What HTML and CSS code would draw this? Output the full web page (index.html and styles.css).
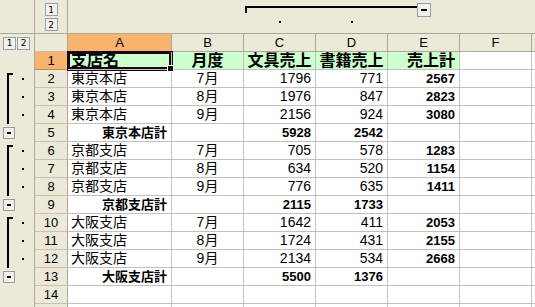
FILE: index.html
```html
<!DOCTYPE html>
<html lang="ja">
<head>
    <meta charset="UTF-8">
    <title>支店別売上 - アウトライン</title>
    <link rel="stylesheet" href="styles.css">
</head>
<body>
<div class="sheet">
    <!-- column outline area -->
    <div class="top corner"></div>
    <div class="top lvl-top">
        <span class="btn">1</span>
        <span class="btn">2</span>
    </div>
    <div class="top"></div>
    <div class="top"></div>
    <div class="top grp-start"><span class="gline first"></span><span class="gdot"></span></div>
    <div class="top grp"><span class="gline"></span><span class="gdot"></span></div>
    <div class="top grp-end"><span class="gline"></span><span class="minus big"></span></div>
    <div class="top"></div>
    <div class="top"></div>

    <!-- column headers -->
    <div class="oc lvl-left"><span class="btn">1</span><span class="btn">2</span></div>
    <div class="rh"></div>
    <div class="ch hl">A</div>
    <div class="ch">B</div>
    <div class="ch">C</div>
    <div class="ch">D</div>
    <div class="ch">E</div>
    <div class="ch">F</div>
    <div class="ch rest"></div>

    <!-- row 1 -->
    <div class="oc"></div>
    <div class="rh hl">1</div>
    <div class="c l g t sel">支店名<span class="handle"></span></div>
    <div class="c m g t">月度</div>
    <div class="c m g t">文具売上</div>
    <div class="c m g t">書籍売上</div>
    <div class="c r g t">売上計</div>
    <div class="c"></div>
    <div class="c rest"></div>

    <!-- 東京本店 -->
    <div class="oc"><span class="bar first"></span><span class="dot"></span></div>
    <div class="rh">2</div>
    <div class="c l">東京本店</div>
    <div class="c m">7月</div>
    <div class="c r">1796</div>
    <div class="c r">771</div>
    <div class="c r b">2567</div>
    <div class="c"></div>
    <div class="c rest"></div>

    <div class="oc"><span class="bar"></span><span class="dot"></span></div>
    <div class="rh">3</div>
    <div class="c l">東京本店</div>
    <div class="c m">8月</div>
    <div class="c r">1976</div>
    <div class="c r">847</div>
    <div class="c r b">2823</div>
    <div class="c"></div>
    <div class="c rest"></div>

    <div class="oc"><span class="bar"></span><span class="dot"></span></div>
    <div class="rh">4</div>
    <div class="c l">東京本店</div>
    <div class="c m">9月</div>
    <div class="c r">2156</div>
    <div class="c r">924</div>
    <div class="c r b">3080</div>
    <div class="c"></div>
    <div class="c rest"></div>

    <div class="oc"><span class="minus"></span></div>
    <div class="rh">5</div>
    <div class="c r b">東京本店計</div>
    <div class="c"></div>
    <div class="c r b">5928</div>
    <div class="c r b">2542</div>
    <div class="c"></div>
    <div class="c"></div>
    <div class="c rest"></div>

    <!-- 京都支店 -->
    <div class="oc"><span class="bar first"></span><span class="dot"></span></div>
    <div class="rh">6</div>
    <div class="c l">京都支店</div>
    <div class="c m">7月</div>
    <div class="c r">705</div>
    <div class="c r">578</div>
    <div class="c r b">1283</div>
    <div class="c"></div>
    <div class="c rest"></div>

    <div class="oc"><span class="bar"></span><span class="dot"></span></div>
    <div class="rh">7</div>
    <div class="c l">京都支店</div>
    <div class="c m">8月</div>
    <div class="c r">634</div>
    <div class="c r">520</div>
    <div class="c r b">1154</div>
    <div class="c"></div>
    <div class="c rest"></div>

    <div class="oc"><span class="bar"></span><span class="dot"></span></div>
    <div class="rh">8</div>
    <div class="c l">京都支店</div>
    <div class="c m">9月</div>
    <div class="c r">776</div>
    <div class="c r">635</div>
    <div class="c r b">1411</div>
    <div class="c"></div>
    <div class="c rest"></div>

    <div class="oc"><span class="minus"></span></div>
    <div class="rh">9</div>
    <div class="c r b">京都支店計</div>
    <div class="c"></div>
    <div class="c r b">2115</div>
    <div class="c r b">1733</div>
    <div class="c"></div>
    <div class="c"></div>
    <div class="c rest"></div>

    <!-- 大阪支店 -->
    <div class="oc"><span class="bar first"></span><span class="dot"></span></div>
    <div class="rh">10</div>
    <div class="c l">大阪支店</div>
    <div class="c m">7月</div>
    <div class="c r">1642</div>
    <div class="c r">411</div>
    <div class="c r b">2053</div>
    <div class="c"></div>
    <div class="c rest"></div>

    <div class="oc"><span class="bar"></span><span class="dot"></span></div>
    <div class="rh">11</div>
    <div class="c l">大阪支店</div>
    <div class="c m">8月</div>
    <div class="c r">1724</div>
    <div class="c r">431</div>
    <div class="c r b">2155</div>
    <div class="c"></div>
    <div class="c rest"></div>

    <div class="oc"><span class="bar"></span><span class="dot"></span></div>
    <div class="rh">12</div>
    <div class="c l">大阪支店</div>
    <div class="c m">9月</div>
    <div class="c r">2134</div>
    <div class="c r">534</div>
    <div class="c r b">2668</div>
    <div class="c"></div>
    <div class="c rest"></div>

    <div class="oc"><span class="minus"></span></div>
    <div class="rh">13</div>
    <div class="c r b">大阪支店計</div>
    <div class="c"></div>
    <div class="c r b">5500</div>
    <div class="c r b">1376</div>
    <div class="c"></div>
    <div class="c"></div>
    <div class="c rest"></div>

    <!-- empty rows -->
    <div class="oc"></div>
    <div class="rh">14</div>
    <div class="c"></div>
    <div class="c"></div>
    <div class="c"></div>
    <div class="c"></div>
    <div class="c"></div>
    <div class="c"></div>
    <div class="c rest"></div>

    <div class="oc"></div>
    <div class="rh"></div>
    <div class="c"></div>
    <div class="c"></div>
    <div class="c"></div>
    <div class="c"></div>
    <div class="c"></div>
    <div class="c"></div>
    <div class="c rest"></div>
</div>
</body>
</html>
```

FILE: styles.css
```css
body {
    margin: 0;
    background: #fff;
}
.sheet {
    display: grid;
    grid-template-columns: 35px 33px 104px 72px 72px 72px 72px 72px 1fr;
    grid-template-rows: 34px repeat(16, 18px);
    width: 535px;
    height: 307px;
    overflow: hidden;
    font-family: "Liberation Sans", "Noto Sans CJK JP", sans-serif;
    color: #000;
}
.sheet > div {
    box-sizing: border-box;
}

/* outline areas */
.top {
    background: #ece9d8;
    border-bottom: 1px solid #aca899;
}
.corner, .lvl-top {
    border-right: 1px solid #aca899;
}
.lvl-top {
    display: flex;
    flex-direction: column;
    align-items: center;
    gap: 2px;
    padding-top: 3px;
}
.grp-start, .grp {
    display: flex;
    flex-direction: column;
}
.gline {
    margin-top: 6px;
    border-top: 2px solid #000;
}
.gline.first {
    height: 5px;
    margin-left: 1px;
    border-left: 2px solid #000;
}
.gdot {
    align-self: center;
    width: 2px;
    height: 2px;
    background: #000;
    margin-top: 13px;
}
.grp-start .gdot {
    margin-top: 8px;
}
.grp-end {
    display: flex;
    align-items: flex-start;
}
.grp-end .gline {
    width: 29px;
}

.btn {
    width: 13px;
    height: 13px;
    box-sizing: border-box;
    border: 1px solid #91a1b6;
    background: #f3f1e8;
    font: 9px "DejaVu Sans", sans-serif;
    display: flex;
    align-items: center;
    justify-content: center;
}
.lvl-left {
    align-items: center;
    padding-left: 3px;
    gap: 1px;
}
.minus {
    width: 12px;
    height: 12px;
    box-sizing: border-box;
    border: 1px solid #8e9eb4;
    background: #f3f1e8;
    margin-left: 3px;
    align-self: center;
    display: flex;
    align-items: center;
    justify-content: center;
}
.minus::before {
    content: "";
    width: 4px;
    height: 2px;
    background: #000;
}
.minus.big {
    width: 14px;
    height: 14px;
    margin-left: 0;
    margin-top: 3px;
    align-self: flex-start;
}
.minus.big::before {
    width: 6px;
}

.oc {
    background: #ece9d8;
    border-right: 1px solid #aca899;
    display: flex;
}
.bar {
    width: 4px;
    margin-left: 7px;
    border-left: 2px solid #000;
}
.bar.first {
    margin-top: 3px;
    border-top: 2px solid #000;
}
.dot {
    width: 2px;
    height: 2px;
    background: #000;
    margin-left: 9px;
    align-self: center;
}

/* headers */
.rh, .ch {
    background: #ece9d8;
    border-right: 1px solid #aca899;
    border-bottom: 1px solid #c7c3b3;
    display: flex;
    align-items: center;
    justify-content: center;
    font-size: 13px;
}
.ch {
    border-bottom-color: #aca899;
}
.ch.rest {
    border-right: none;
}
.hl {
    background: #f8b46c;
    border-bottom-color: #c98a48;
}

/* cells */
.c {
    background: #fff;
    border-right: 1px solid #c0c0c0;
    border-bottom: 1px solid #c0c0c0;
    display: flex;
    align-items: center;
    padding: 0 4px;
    font-size: 14px;
    line-height: 17px;
    white-space: nowrap;
}
.c.rest {
    border-right: none;
}
.l {
    justify-content: flex-start;
    padding-left: 3px;
}
.m {
    justify-content: center;
}
.r {
    justify-content: flex-end;
}
.g {
    background: #ccffcc;
}
.t {
    font-size: 16px;
    font-weight: bold;
}
.b {
    font-size: 13px;
    font-weight: bold;
}
.sel {
    position: relative;
    z-index: 1;
    box-shadow: inset 0 0 0 2px #170817, 0 0 0 1px #170817;
}
.handle {
    position: absolute;
    right: -3px;
    bottom: -3px;
    width: 5px;
    height: 5px;
    background: #170817;
    border: 1px solid #fff;
}
```
